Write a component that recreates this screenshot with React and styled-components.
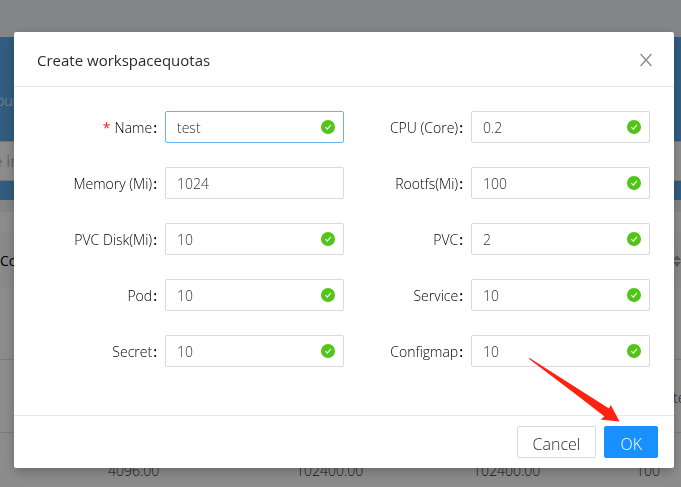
import React from "react";
import styled, { createGlobalStyle } from "styled-components";

const GlobalStyle = createGlobalStyle`
  *, *::before, *::after { box-sizing: border-box; }
  body {
    margin: 0;
    overflow: hidden;
    background: #f0f2f5;
    color: #000;
    font-family: "Open Sans", "Noto Sans", sans-serif;
    font-size: 14px;
    font-weight: 300;
    line-height: 22px;
  }
  button, input { font: inherit; }
`;

const Page = styled.div`
  height: 100vh;
  overflow: hidden;
  padding-top: 37px;
`;

const Banner = styled.section`
  display: flex;
  flex-direction: column;
  justify-content: space-between;
  height: 163px;
  padding: 53px 0 19px;
  background: #5da9ea;
  color: #fff;
`;

const BannerText = styled.p`
  margin: 0 0 0 -4px;
`;

const SearchInput = styled.input`
  width: 100%;
  height: 40px;
  padding: 0;
  border: 1px solid #d9d9d9;
  border-width: 1px 0;
  background: #fff;
  font-size: 16px;
  font-weight: 400;
  text-indent: -7px;
  &::placeholder { color: #b4b8c0; opacity: 1; }
`;

const TablePanel = styled.section`
  margin-top: 12px;
  padding-top: 20px;
  background: #fff;
`;

const Table = styled.table`
  width: 100%;
  table-layout: fixed;
  border-collapse: separate;
  border-spacing: 0;
`;

const Column = styled.col`
  width: ${(p) => p.$width}px;
`;

const HeadCell = styled.th`
  height: 55px;
  padding: 2px 0 0;
  background: #fafafa;
  font-weight: 400;
  text-align: left;
  white-space: nowrap;
`;

const Cell = styled.td`
  height: 73px;
  padding: 4px 0 0;
  border-bottom: 1px solid #e0e0e0;
  color: ${(p) => (p.$link ? "#1f3d63" : "rgba(0, 0, 0, 0.85)")};
  white-space: nowrap;
`;

const Sorter = styled.svg`
  display: block;
`;

const Mask = styled.div`
  position: fixed;
  inset: 0;
  padding: 32px 7px 19px 14px;
  background: rgba(0, 0, 0, 0.45);
`;

const Dialog = styled.form`
  position: relative;
  border-radius: 2px;
  background: #fff;
  box-shadow: 0 4px 12px rgba(0, 0, 0, 0.25);
`;

const DialogHeader = styled.header`
  display: flex;
  align-items: center;
  justify-content: space-between;
  padding: 16px 22px 16px 23px;
  border-bottom: 1px solid #e8e8e8;
`;

const Title = styled.h1`
  margin: 0;
  padding-top: 2px;
  color: rgba(0, 0, 0, 0.85);
  font-size: 15px;
  font-weight: 400;
  line-height: 20px;
`;

const CloseButton = styled.button`
  display: flex;
  padding: 2px 0 0;
  border: 0;
  background: none;
  color: #8c8c8c;
  cursor: pointer;
`;

const Fields = styled.div`
  display: grid;
  grid-template-columns: 1fr 1fr;
  padding: 24px;
`;

const Field = styled.div`
  display: grid;
  grid-template-columns: 127px 1fr;
  height: 56px;
`;

const Label = styled.label`
  padding-right: 8px;
  line-height: 34px;
  text-align: right;
  white-space: nowrap;
  &::after {
    content: ":";
    margin-left: 1px;
    font-weight: 600;
  }
`;

const Required = styled.span`
  margin-right: 4px;
  color: #f5222d;
  font-weight: 400;
`;

const Control = styled.div`
  position: relative;
  height: 32px;
`;

const TextInput = styled.input`
  display: block;
  width: 100%;
  height: 32px;
  padding: 0 30px 0 11px;
  border: 1px solid ${(p) => (p.$active ? "#69b1f0" : "#d9d9d9")};
  border-radius: 2px;
  outline: 0;
  background: #fff;
  color: rgba(0, 0, 0, 0.85);
`;

const ValidMark = styled.svg`
  position: absolute;
  top: 9px;
  right: 9px;
`;

const DialogFooter = styled.footer`
  display: flex;
  justify-content: flex-end;
  gap: 8px;
  padding: 10px 16px;
  border-top: 1px solid #e8e8e8;
`;

const Button = styled.button`
  height: 32px;
  padding: 4px 15px 0;
  border: 1px solid ${(p) => (p.$primary ? "#1890ff" : "#d9d9d9")};
  border-radius: 2px;
  background: ${(p) => (p.$primary ? "#1890ff" : "#fff")};
  color: ${(p) => (p.$primary ? "#fff" : "rgba(0, 0, 0, 0.85)")};
  font-size: 16px;
  line-height: 24px;
  cursor: pointer;
`;

const Pointer = styled.svg`
  position: absolute;
  right: 54px;
  bottom: 46px;
  pointer-events: none;
`;

const fields = [
  { id: "name", label: "Name", value: "test", required: true, active: true, valid: true },
  { id: "cpu", label: "CPU (Core)", value: "0.2", valid: true },
  { id: "memory", label: "Memory (Mi)", value: "1024" },
  { id: "rootfs", label: "Rootfs(Mi)", value: "100", valid: true },
  { id: "pvc-disk", label: "PVC Disk(Mi)", value: "10", valid: true },
  { id: "pvc", label: "PVC", value: "2", valid: true },
  { id: "pod", label: "Pod", value: "10", valid: true },
  { id: "service", label: "Service", value: "10", valid: true },
  { id: "secret", label: "Secret", value: "10", valid: true },
  { id: "configmap", label: "Configmap", value: "10", valid: true },
];

const columnWidths = [108, 188, 177, 163, 37, 8];

const rows = [
  ["", "", "", "", "", ""],
  ["", "", "", "", "", "te"],
  ["", "4096.00", "102400.00", "102400.00", "100", ""],
];

function FormField({ id, label, value, required, active, valid }) {
  return (
    <Field>
      <Label htmlFor={id}>
        {required && <Required>*</Required>}
        {label}
      </Label>
      <Control>
        <TextInput id={id} type="text" defaultValue={value} required={required} $active={active} />
        {valid && (
          <ValidMark width="14" height="14" viewBox="0 0 14 14" aria-hidden="true">
            <circle cx="7" cy="7" r="7" fill="#52c41a" />
            <path d="M4.3 7.2 6.3 9.2 9.8 4.8" fill="none" stroke="#fff" strokeWidth="1.1" />
          </ValidMark>
        )}
      </Control>
    </Field>
  );
}

function QuotaTable() {
  return (
    <Table>
      <colgroup>
        {columnWidths.map((width, i) => (
          <Column key={i} $width={width} />
        ))}
      </colgroup>
      <thead>
        <tr>
          <HeadCell>Co</HeadCell>
          <HeadCell />
          <HeadCell />
          <HeadCell />
          <HeadCell />
          <HeadCell>
            <Sorter width="8" height="12" viewBox="0 0 8 12" aria-hidden="true">
              <path d="M4 0 8 5H0ZM4 12 0 7H8Z" fill="#a6a6a6" />
            </Sorter>
          </HeadCell>
        </tr>
      </thead>
      <tbody>
        {rows.map((cells, r) => (
          <tr key={r}>
            {cells.map((text, c) => (
              <Cell key={c} $link={c === 5}>{text}</Cell>
            ))}
          </tr>
        ))}
      </tbody>
    </Table>
  );
}

export default function App() {
  return (
    <>
      <GlobalStyle />
      <Page>
        <Banner>
          <BannerText>our</BannerText>
          <SearchInput type="search" placeholder="e in" aria-label="Search" />
        </Banner>
        <TablePanel>
          <QuotaTable />
        </TablePanel>
      </Page>
      <Mask>
        <Dialog role="dialog" aria-labelledby="dialog-title" onSubmit={(e) => e.preventDefault()}>
          <DialogHeader>
            <Title id="dialog-title">Create workspacequotas</Title>
            <CloseButton type="button" aria-label="Close">
              <svg width="12" height="14" viewBox="0 0 12 14" aria-hidden="true">
                <path d="M0.6 1 11.4 13M11.4 1 0.6 13" stroke="currentColor" strokeWidth="1.4" />
              </svg>
            </CloseButton>
          </DialogHeader>
          <Fields>
            {fields.map((field) => (
              <FormField key={field.id} {...field} />
            ))}
          </Fields>
          <DialogFooter>
            <Button type="button">Cancel</Button>
            <Button type="submit" $primary>OK</Button>
          </DialogFooter>
          <Pointer width="92" height="64" viewBox="0 0 92 64" aria-hidden="true">
            <path d="M0.5 0.5 2 0.3 81 50.5 82.8 47 91.5 63.5 72.5 61.5 76.5 58.5 50 38Z" fill="#ff2112" />
          </Pointer>
        </Dialog>
      </Mask>
    </>
  );
}
